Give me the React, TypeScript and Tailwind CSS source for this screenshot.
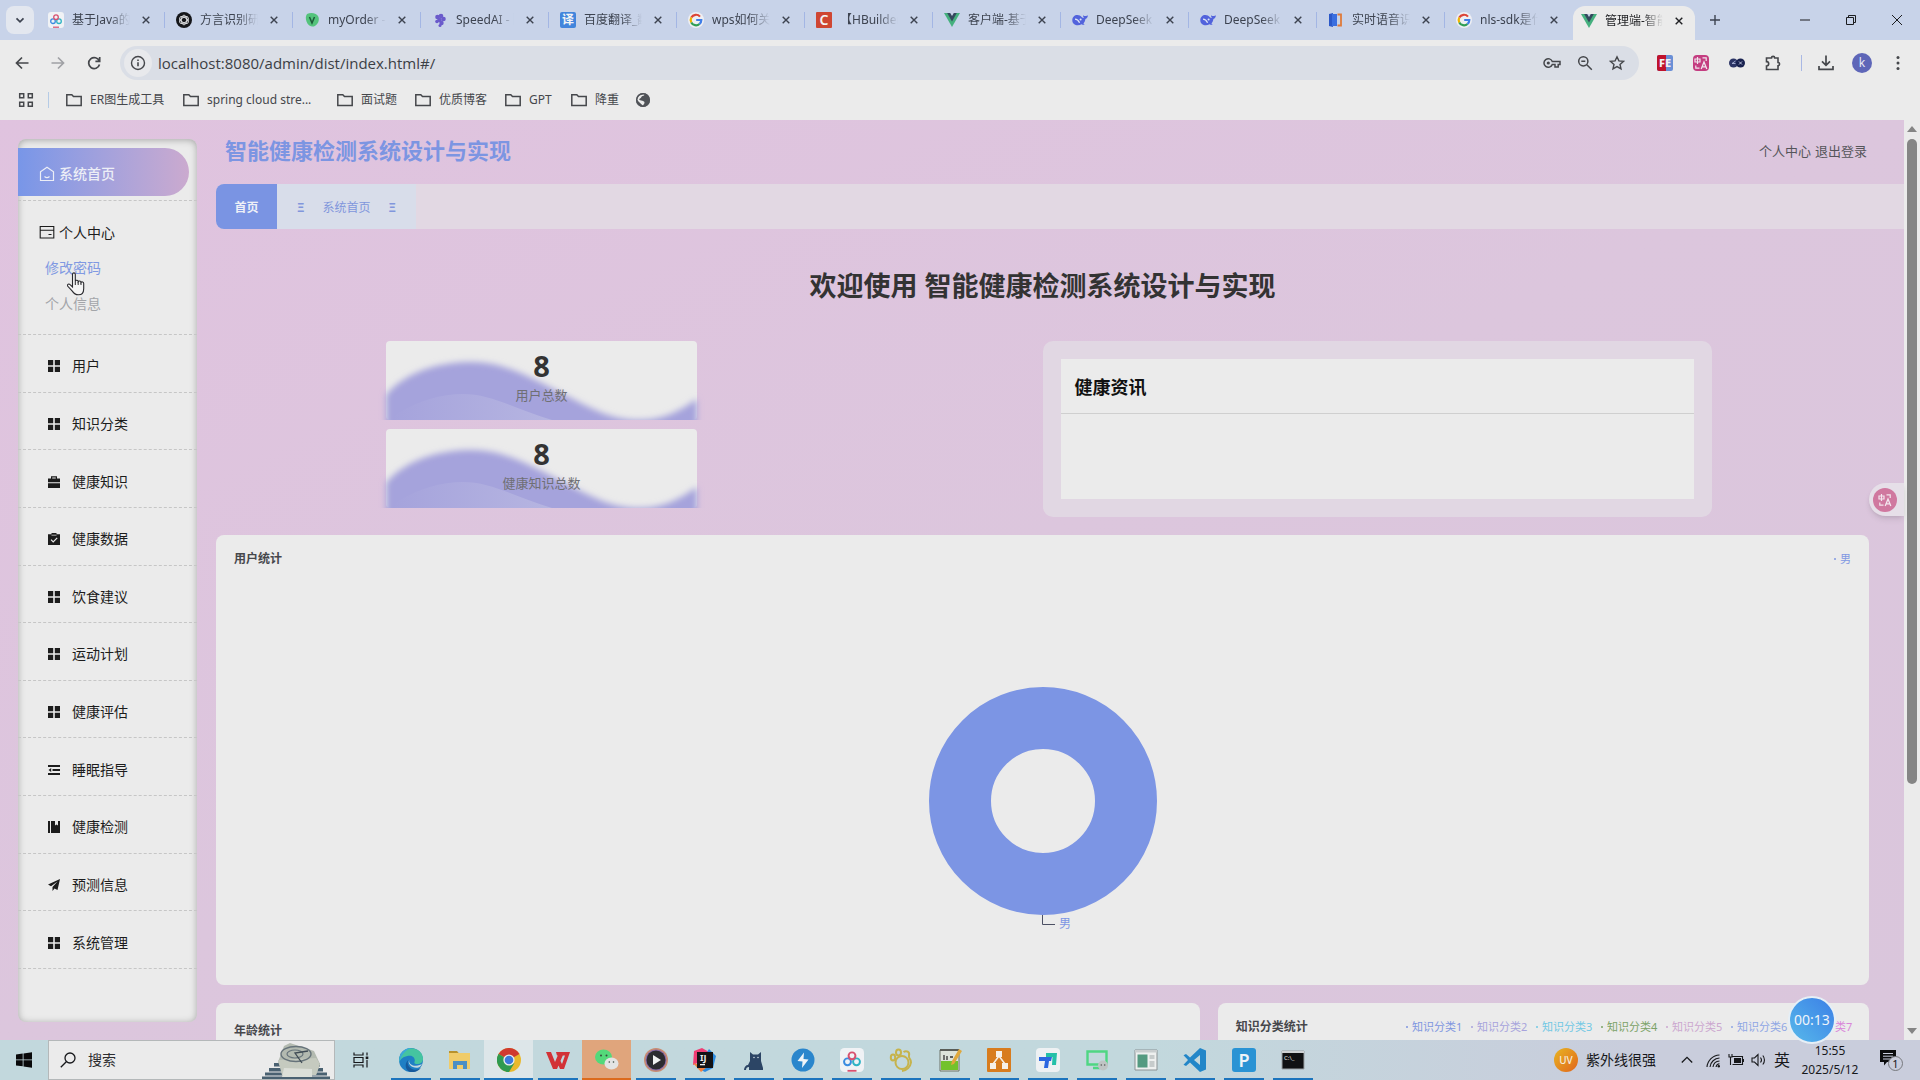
import React from "react";

type P = { children?: React.ReactNode; className?: string; box?: string };

const Svg = ({ children, className = "size-4", box = "0 0 16 16" }: P) => (
  <svg viewBox={box} className={className} fill="none" stroke="currentColor" aria-hidden="true">
    {children}
  </svg>
);

const GLYPH = '"Noto Sans","Noto Sans CJK SC",sans-serif';

/* ---------- favicons ---------- */

const Vue = () => (
  <Svg>
    <path d="M0 1h16L8 15z" fill="#45b07e" stroke="none" />
    <path d="M3.2 1h9.6L8 9.4z" fill="#34495e" stroke="none" />
    <path d="M6.2 1h3.6L8 4z" fill="#c8d3e9" stroke="none" />
  </Svg>
);

const Google = () => (
  <Svg>
    <circle cx="8" cy="8" r="8" fill="#eeeff3" stroke="none" />
    <path d="M12 4.6A5.3 5.3 0 0 0 3.3 5.6" stroke="#dc4437" strokeWidth="2.2" />
    <path d="M3.3 5.6a5.3 5.3 0 0 0 0 4.8" stroke="#f0b400" strokeWidth="2.2" />
    <path d="M3.3 10.4a5.3 5.3 0 0 0 8.2 1.6" stroke="#2f9e55" strokeWidth="2.2" />
    <path d="M11.5 12A5.3 5.3 0 0 0 13.3 8H8.2" stroke="#3f7ee8" strokeWidth="2.2" />
  </Svg>
);

const Whale = () => (
  <Svg>
    <path
      d="M.3 8.2C.3 5 2.6 3 5.300 3c2 0 3.200.8 4.600 2.200.8.8 1.400 1 2 .6-.9-.8-.9-2-.5-2.600.5.8 1.400 1 2.400.9.9-.1 1.500-.5 2-.9.2 1.800-.8 3.200-2.400 3.700-.2 1.800-.9 3.400-2 4.500l1.200 1.100c-1 .5-2.200.2-3-.3C5.500 14.400.3 12.800.3 8.200z"
      fill="#5263dc"
      stroke="none"
    />
    <path d="M3 7.200c2 0 3.600 1.600 4.600 3.600" stroke="#dfe5f5" strokeWidth="1.300" />
    <circle cx="8.600" cy="7.600" r="1" fill="#dfe5f5" stroke="none" />
  </Svg>
);

const Netdisk = ({ className = "size-4" }: P) => (
  <Svg className={className}>
    <rect width="16" height="16" rx="3" fill="#f0f2f5" stroke="none" />
    <circle cx="5" cy="9.200" r="2.300" stroke="#3a8be0" strokeWidth="1.300" />
    <circle cx="11" cy="9.200" r="2.300" stroke="#2fb3c4" strokeWidth="1.300" />
    <circle cx="8" cy="5.200" r="2.300" stroke="#d8506f" strokeWidth="1.300" />
    <path d="M5 15.200h6" stroke="#d8506f" strokeWidth="1.200" />
  </Svg>
);

const OpenAI = () => (
  <Svg>
    <circle cx="8" cy="8" r="8" fill="#15161a" stroke="none" />
    <g stroke="#d9dadd" strokeWidth=".9">
      <ellipse cx="8" cy="8" rx="2.600" ry="4.800" />
      <ellipse cx="8" cy="8" rx="2.600" ry="4.800" transform="rotate(60 8 8)" />
      <ellipse cx="8" cy="8" rx="2.600" ry="4.800" transform="rotate(120 8 8)" />
    </g>
  </Svg>
);

const Letter = ({ t, bg, fg = "#f3f4f6", r = 1, size = 12 }: { t: string; bg: string; fg?: string; r?: number; size?: number }) => (
  <Svg>
    <rect width="16" height="16" rx={r} fill={bg} stroke="none" />
    <text x="8" y={8 + size * 0.36} fontSize={size} textAnchor="middle" fill={fg} stroke="none" fontFamily={GLYPH} fontWeight="600">
      {t}
    </text>
  </Svg>
);

const Leaf = () => (
  <Svg>
    <path d="M3 2c4-2 10-1 11.500 3C16 10 12 15 8 14.600 3 14 0 6 3 2z" fill="#54c37c" stroke="none" />
    <path d="M5.500 5l2.500 6 2.500-6" stroke="#1d5a3a" strokeWidth="1.500" />
  </Svg>
);

const Grape = () => (
  <Svg>
    <g fill="#6a5acb" stroke="none">
      <circle cx="5.500" cy="5" r="2.300" />
      <circle cx="9" cy="4" r="2.300" />
      <circle cx="11.500" cy="7" r="2.300" />
      <circle cx="7.500" cy="8" r="2.300" />
      <circle cx="5" cy="9.500" r="1.800" />
      <circle cx="9.500" cy="11" r="2.200" />
      <circle cx="8" cy="13.500" r="1.500" />
    </g>
  </Svg>
);

const Book = () => (
  <Svg>
    <path d="M1 2l4-1v14l-4-1z" fill="#2c58c8" stroke="none" />
    <path d="M4 2h5v12H4z" fill="#3b6fe0" stroke="none" />
    <path d="M9.500 2.500H13v11H9.500" stroke="#df7b3b" strokeWidth="1.800" />
  </Svg>
);

const tabs: { label: string; icon: React.ReactNode }[] = [
  { label: "基于Java的健康", icon: <Netdisk /> },
  { label: "方言识别研究", icon: <OpenAI /> },
  { label: "myOrder - 订单", icon: <Leaf /> },
  { label: "SpeedAI - 降重", icon: <Grape /> },
  { label: "百度翻译_翻译", icon: <Letter t="译" bg="#4285dc" r={2} size={12} /> },
  { label: "wps如何关闭", icon: <Google /> },
  { label: "【HBuilder】", icon: <Letter t="C" bg="#cf4632" size={14} /> },
  { label: "客户端-基于", icon: <Vue /> },
  { label: "DeepSeek - 探索", icon: <Whale /> },
  { label: "DeepSeek - 探索", icon: <Whale /> },
  { label: "实时语音识别", icon: <Book /> },
  { label: "nls-sdk是什么", icon: <Google /> },
];

const FADE = "w-[58px] overflow-hidden whitespace-nowrap text-left [mask-image:linear-gradient(to_right,#000_65%,transparent)]";

const Cross = ({ className = "size-2" }: P) => (
  <Svg className={className} box="0 0 8 8">
    <path d="M.7.7l6.600 6.600M7.300.7L.7 7.300" strokeWidth="1.400" />
  </Svg>
);

function TabStrip() {
  return (
    <div className="flex h-10 shrink-0 items-stretch bg-[#c8d3e9] text-xs text-[#3d4350]">
      <div className="flex w-[37px] shrink-0 items-center pl-1.5">
        <button aria-label="搜索标签页" className="flex h-7 w-7 items-center justify-center rounded-lg bg-[#e3e7ef]">
          <Svg className="size-2.5" box="0 0 10 10">
            <path d="M1.500 3.300L5 6.800l3.500-3.500" strokeWidth="1.700" />
          </Svg>
        </button>
      </div>
      {tabs.map((t, i) => (
        <div key={i} className="flex w-32 min-w-0 items-center">
          <button className="flex min-w-0 items-center gap-2 pl-[11px]">
            {t.icon}
            <span className={FADE}>{t.label}</span>
          </button>
          <button aria-label="关闭" className="ml-auto mr-3.5 shrink-0">
            <Cross />
          </button>
          <span className={i < 11 ? "h-4 w-px shrink-0 bg-[#a3b6e4]" : "h-4 w-px shrink-0"} />
        </div>
      ))}
      <div className="mt-1.5 flex w-[122px] shrink-0 items-center rounded-t-xl bg-[#ebebeb] pb-1 text-[#1f2023]">
        <button className="flex items-center gap-2 pl-2">
          <Vue />
          <span className={FADE}>管理端-智能健康</span>
        </button>
        <button aria-label="关闭" className="ml-auto mr-3 shrink-0">
          <Cross />
        </button>
      </div>
      <button aria-label="新标签页" className="ml-[15px] shrink-0">
        <Svg className="size-2.5" box="0 0 10 10">
          <path d="M5 0v10M0 5h10" strokeWidth="1.400" />
        </Svg>
      </button>
      <div className="ml-auto flex shrink-0 items-center gap-9 pr-[18px] text-[#1c1d20]">
        <button aria-label="最小化">
          <Svg className="size-2.5" box="0 0 10 10">
            <path d="M0 5h10" />
          </Svg>
        </button>
        <button aria-label="还原">
          <Svg className="size-2.5" box="0 0 10 10">
            <path d="M.5 2.500h7v7h-7zM2.500 2.500v-2h7v7h-2" />
          </Svg>
        </button>
        <button aria-label="关闭窗口">
          <Svg className="size-2.5" box="0 0 10 10">
            <path d="M0 0l10 10M10 0L0 10" />
          </Svg>
        </button>
      </div>
    </div>
  );
}

/* ---------- address bar and bookmarks ---------- */

const TranslateMark = ({ className = "size-4" }: P) => (
  <Svg className={className}>
    <path d="M2 4h5v3H2zM4.500 2v7" strokeWidth="1.200" />
    <path d="M9.500 2.800h3.700V6M2.800 10.500v2.700h3.700" strokeWidth="1.200" />
    <path d="M8.200 14l2.800-7 2.800 7M9.200 11.800h3.600" strokeWidth="1.300" />
  </Svg>
);

function Toolbar() {
  return (
    <div className="flex h-[46px] shrink-0 items-center bg-[#ebebeb] text-[#45474b]">
      <div className="flex items-center gap-5 pl-3.5">
        <button aria-label="后退">
          <Svg>
            <path d="M14.500 8H2.500M8 2.500L2.500 8 8 13.500" strokeWidth="1.700" />
          </Svg>
        </button>
        <button aria-label="前进" className="text-[#a0a1a5]">
          <Svg>
            <path d="M1.500 8h12M8 2.500l5.500 5.500L8 13.500" strokeWidth="1.700" />
          </Svg>
        </button>
        <button aria-label="重新加载">
          <Svg>
            <path d="M13.300 6A5.500 5.500 0 1 0 13.500 9.500M13.700 2v4.300H9.400" strokeWidth="1.700" />
          </Svg>
        </button>
      </div>
      <form className="ml-[18px] flex h-[34px] min-w-0 flex-1 items-center rounded-full bg-[#dadee6] pl-1 pr-3.5">
        <button type="button" aria-label="网站信息" className="flex size-7 items-center justify-center rounded-full bg-[#e8e9ec]">
          <Svg>
            <circle cx="8" cy="8" r="6.500" strokeWidth="1.400" />
            <path d="M8 7.200v4M8 4.500v1.500" strokeWidth="1.600" />
          </Svg>
        </button>
        <input
          aria-label="地址"
          defaultValue="localhost:8080/admin/dist/index.html#/"
          className="ml-1.5 min-w-0 flex-1 bg-transparent font-['Open_Sans',sans-serif] text-[15px] text-[#3c3f45] outline-none"
        />
        <div className="flex items-center gap-4">
          <button type="button" aria-label="密码">
            <Svg className="h-4 w-[18px]" box="0 0 18 16">
              <path d="M9.300 6.500a4.300 4.300 0 1 0 0 3H12v2.500h3.200V9.500H17v-3z" strokeWidth="1.500" />
              <circle cx="5.300" cy="8" r="1.600" fill="currentColor" stroke="none" />
            </Svg>
          </button>
          <button type="button" aria-label="缩放">
            <Svg>
              <circle cx="6.300" cy="6.300" r="4.600" strokeWidth="1.500" />
              <path d="M9.800 9.800l5 5M4.300 6.300h4" strokeWidth="1.500" />
            </Svg>
          </button>
          <button type="button" aria-label="收藏">
            <Svg>
              <path d="M8 1.800l1.900 4.100 4.500.5-3.400 3 1 4.400L8 11.600l-4 2.200 1-4.400-3.400-3 4.500-.5z" strokeWidth="1.400" />
            </Svg>
          </button>
        </div>
      </form>
      <div className="flex shrink-0 items-center gap-5 pl-[18px] pr-3.5">
        <button aria-label="FE">
          <Svg>
            <rect width="16" height="16" rx="2" fill="#6a8fd6" stroke="none" />
            <path d="M2 0h7v16H2a2 2 0 0 1-2-2V2a2 2 0 0 1 2-2z" fill="#c0122c" stroke="none" />
            <text x="8" y="12" fontSize="11" fontWeight="800" textAnchor="middle" fill="#f2f2f4" stroke="none" fontFamily={GLYPH}>
              FE
            </text>
          </Svg>
        </button>
        <button aria-label="翻译" className="rounded-sm bg-[#c43d80] text-[#f0e6ee]">
          <TranslateMark />
        </button>
        <button aria-label="扩展程序">
          <Svg>
            <circle cx="4.500" cy="8" r="4.500" fill="#2c3566" stroke="none" />
            <circle cx="11.500" cy="8" r="4.500" fill="#18214f" stroke="none" />
            <path d="M6.500 6L3 8.500h3.500" stroke="#a9b3d8" strokeWidth=".9" />
            <path d="M10 6.500l3 3M13 6.500l-3 3" stroke="#c9cfe8" strokeWidth=".9" />
          </Svg>
        </button>
        <button aria-label="扩展管理">
          <Svg>
            <path d="M1.500 3h5a1.600 1.600 0 0 1 3.200 0h3.300v4.500a1.600 1.600 0 0 1 0 3.200v3.800H1.500V11a2.200 2.200 0 0 0 0-4.400z" strokeWidth="1.600" />
          </Svg>
        </button>
        <span className="-mr-1 h-4 w-px bg-[#a9b8e4]" />
        <button aria-label="下载">
          <Svg>
            <path d="M8 .5v9.500M4 6.300l4 4 4-4M1 11v3.300h14V11" strokeWidth="1.700" />
          </Svg>
        </button>
        <button aria-label="用户" className="-mx-0.5 flex size-5 items-center justify-center rounded-full bg-[#5e66b8] text-xs text-[#e8e9f4]">
          k
        </button>
        <button aria-label="更多">
          <Svg>
            <g fill="currentColor" stroke="none">
              <circle cx="8" cy="2.500" r="1.500" />
              <circle cx="8" cy="8" r="1.500" />
              <circle cx="8" cy="13.500" r="1.500" />
            </g>
          </Svg>
        </button>
      </div>
    </div>
  );
}

const bookmarks = [
  { label: "ER图生成工具", cls: "w-[117px]" },
  { label: "spring cloud stre...", cls: "w-[154px]" },
  { label: "面试题", cls: "w-[78px]" },
  { label: "优质博客", cls: "w-[90px]" },
  { label: "GPT", cls: "w-[66px]" },
  { label: "降重", cls: "w-[64px]" },
];

function Bookmarks() {
  return (
    <div className="flex h-[34px] shrink-0 items-center bg-[#ebebeb] pb-1.5 text-xs text-[#45474b]">
      <button aria-label="应用" className="ml-[18px]">
        <Svg>
          <path d="M1.700 1.700h4v4h-4zM10.300 1.700h4v4h-4zM1.700 10.300h4v4h-4zM10.300 10.300h4v4h-4z" strokeWidth="1.500" />
        </Svg>
      </button>
      <span className="ml-3.5 mr-[17px] h-4 w-px bg-[#b5cbe6]" />
      {bookmarks.map((b) => (
        <a key={b.label} href="#/" className={`${b.cls} flex items-center gap-2 whitespace-nowrap`}>
          <Svg className="size-4 shrink-0">
            <path d="M.8 2.800h5l1.700 1.800h7.700v8.900H.8z" strokeWidth="1.500" />
          </Svg>
          {b.label}
        </a>
      ))}
      <a href="#/" aria-label="网站">
        <Svg>
          <circle cx="8" cy="8" r="7" fill="#505358" stroke="none" />
          <path d="M9.500 1.800c.3 1.500-.5 2-2 2.200S6.500 6 5 6.500 4 8 6 8.500s3.500.5 3.500 2-1 1.500-1.500 3.300L3.500 9.500 2 7.500l2-4z" fill="#ebebeb" stroke="none" />
          <circle cx="8" cy="8" r="6.300" stroke="#505358" strokeWidth="1.400" />
        </Svg>
      </a>
    </div>
  );
}

/* ---------- sidebar ---------- */

const I = ({ children }: P) => (
  <Svg className="size-3 shrink-0" box="0 0 12 12">
    <g fill="currentColor" stroke="none">{children}</g>
  </Svg>
);
const GridI = () => (
  <I>
    <path d="M0 0h5.200v5.200H0zM6.800 0H12v5.200H6.800zM0 6.800h5.200V12H0zM6.800 6.800H12V12H6.800z" />
  </I>
);

const menu: { label: string; icon: React.ReactNode }[] = [
  { label: "用户", icon: <GridI /> },
  { label: "知识分类", icon: <GridI /> },
  {
    label: "健康知识",
    icon: (
      <I>
        <path d="M3 2.500V.3h6v2.200h3v3.700H0V2.500zm1.200 0h3.600V1.400H4.200zM0 7.200h12V12H0z" />
      </I>
    ),
  },
  {
    label: "健康数据",
    icon: (
      <I>
        <path d="M0 1.200h3.500V0h5v1.200H12V12H0z" />
        <path d="M3 6.600l2.200 2.200L9.200 4.800" fill="none" stroke="#ebebeb" strokeWidth="1.200" />
        <path d="M3.500 2.200h5" stroke="#ebebeb" strokeWidth=".7" />
      </I>
    ),
  },
  { label: "饮食建议", icon: <GridI /> },
  { label: "运动计划", icon: <GridI /> },
  { label: "健康评估", icon: <GridI /> },
  {
    label: "睡眠指导",
    icon: (
      <I>
        <path d="M0 1h12v2H0zM4.500 5H12v2H4.500zM0 9h12v2H0zM3.200 4v4L.5 6z" />
      </I>
    ),
  },
  {
    label: "健康检测",
    icon: (
      <I>
        <path d="M0 0h2v12H0zM3 0h4v4.500L8.500 3.400 10 4.500V0h2v12H3z" />
      </I>
    ),
  },
  {
    label: "预测信息",
    icon: (
      <I>
        <path d="M12 0L0 5.500l3 1.700L9.500 2.500 4.500 8v4l2-2.600 3 1.600z" />
      </I>
    ),
  },
  { label: "系统管理", icon: <GridI /> },
];

function Sidebar() {
  return (
    <aside className="mb-[18px] ml-[18px] mt-[19px] w-[179px] shrink-0 rounded-lg bg-[#ebebeb] text-sm text-[#1c1c1c] shadow-[inset_0_1px_7px_#a5a5a5]">
      <div className="border-b border-dashed border-[#c6c6c6] pb-1 pt-[9px]">
        <a href="#/" className="mr-2 flex h-12 items-center gap-1 rounded-r-full bg-linear-to-r from-[#7896e8] to-[#cbaacf] pl-[21px] pt-1 text-[#eceef6]">
          <Svg>
            <path d="M8 1.200l6.500 4.600v8.700h-13V5.800zM5.500 10.500c1.400 1.200 3.600 1.200 5 0" strokeWidth="1.200" />
          </Svg>
          <span className="font-medium">系统首页</span>
        </a>
      </div>
      <div className="border-b border-dashed border-[#c6c6c6] pb-[15px] pt-3">
        <a href="#/center" className="flex h-10 items-center gap-1 pl-[21px]">
          <Svg>
            <path d="M1.200 1.500h13.600V13H1.200zM1.200 5.200h13.600M9.500 9.500h3" strokeWidth="1.100" />
          </Svg>
          个人中心
        </a>
        <div className="flex flex-col gap-1.5 pl-[27px] leading-[30px]">
          <a href="#/updatePassword" className="text-[#8099e2]">修改密码</a>
          <a href="#/info" className="text-[#a3a5a9]">个人信息</a>
        </div>
      </div>
      <nav className="grid h-[634px] auto-rows-fr">
        {menu.map((m) => (
          <a key={m.label} href="#/" className="flex items-center gap-3 border-b border-dashed border-[#c6c6c6] pl-[30px] pt-1.5">
            {m.icon}
            {m.label}
          </a>
        ))}
      </nav>
    </aside>
  );
}

/* ---------- dashboard ---------- */

const Stat = ({ value, label, id }: { value: string; label: string; id: string }) => (
  <div className="relative h-[79px] rounded-sm bg-[#ebebeb] text-center">
    <svg viewBox="-10 0 331 79" preserveAspectRatio="none" className="absolute inset-y-0 -left-2.5 h-full w-[331px] overflow-hidden" aria-hidden="true">
      <defs>
        <filter id={`${id}b`} x="-10%" y="-20%" width="120%" height="150%">
          <feGaussianBlur stdDeviation="3" />
        </filter>
        <linearGradient id={`${id}g`}>
          <stop offset="0" stopColor="#a5a3dc" />
          <stop offset="1" stopColor="#b6b5e1" />
        </linearGradient>
      </defs>
      <path
        d="M0 54C22 28 58 21 86 21C122 21 150 40 185 57C212 71 228 79 254 79C282 79 298 66 311 58V110H0z"
        fill="#a5a3dc"
        filter={`url(#${id}b)`}
      />
      <path d="M12 72C32 60 55 53 77 53C106 53 132 69 166 79H6z" fill={`url(#${id}g)`} />
    </svg>
    <div className="relative pt-1.5">
      <div className="text-[29px] font-bold leading-[38px] text-[#333]">{value}</div>
      <div className="text-[13px] leading-5 text-[#6f6f74]">{label}</div>
    </div>
  </div>
);

const legend = [
  "text-[#7f96e0]",
  "text-[#a7a3dc]",
  "text-[#72c8e4]",
  "text-[#7ba267]",
  "text-[#cba7cf]",
  "text-[#8fa6e4]",
  "text-[#d984d9]",
];

function Dashboard() {
  return (
    <main className="flex min-w-0 flex-1 flex-col pl-[19px]">
      <header className="flex h-16 shrink-0 items-center justify-between pb-1 pl-[9px] pr-[37px]">
        <h1 className="text-[22px] font-bold text-[#7c95e2]">智能健康检测系统设计与实现</h1>
        <div className="flex gap-1 pt-1 text-[13px] text-[#55555a]">
          <a href="#/center">个人中心</a>
          <button>退出登录</button>
        </div>
      </header>
      <div className="flex h-[45px] shrink-0 overflow-hidden rounded-l-lg bg-[#e2d8e3] text-xs">
        <a href="#/" className="flex w-[61px] items-center justify-center bg-[#7a94e3] pt-0.5 font-bold text-[#eef0f7]">首页</a>
        <div className="flex w-[139px] items-center justify-center gap-[18px] bg-[#d8ddea] pt-0.5 text-[#8196dc]">
          <span className="font-bold">Ξ</span>
          <span>系统首页</span>
          <span className="font-bold">Ξ</span>
        </div>
      </div>
      <div className="mr-[35px] shrink-0">
        <h2 className="pb-[35px] pt-[37px] text-center text-[27px] font-bold leading-10 text-[#333]">欢迎使用 智能健康检测系统设计与实现</h2>
        <div className="grid grid-cols-2">
          <div className="ml-[170px] flex w-[311px] flex-col gap-[9px]">
            <Stat id="u" value="8" label="用户总数" />
            <Stat id="k" value="8" label="健康知识总数" />
          </div>
          <section className="h-44 w-[81%] rounded-[10px] bg-[#e1d7e3] p-[18px]">
            <div className="h-full bg-[#ebebeb]">
              <h3 className="border-b border-[#cfcfcf] px-3.5 pt-0.5 text-lg font-bold leading-[52px] text-[#111]">健康资讯</h3>
            </div>
          </section>
        </div>
        <section className="mt-[18px] h-[450px] rounded-lg bg-[#ebebeb] px-[18px] pt-4">
          <div className="flex items-center justify-between">
            <h3 className="text-xs font-bold text-[#46474b]">用户统计</h3>
            <span className="flex items-center gap-1 text-[11px] text-[#8198e2]">
              <i className="size-0.5 rounded-full bg-current" />男
            </span>
          </div>
          <svg viewBox="0 0 240 260" className="mx-auto mt-[115px] h-[260px] w-60" role="img" aria-label="用户统计: 男">
            <circle cx="120" cy="118" r="83" fill="none" stroke="#7c95e4" strokeWidth="62" />
            <path d="M119.500 232v9.500H132" fill="none" stroke="#4c5064" />
            <text x="136" y="245" fontSize="12" fill="#7c95e4" fontFamily={GLYPH}>男</text>
          </svg>
        </section>
        <div className="mt-[18px] flex gap-[18px]">
          <section className="h-80 flex-[985] rounded-lg bg-[#ebebeb] px-[18px] pt-5">
            <h3 className="text-xs font-bold text-[#46474b]">年龄统计</h3>
          </section>
          <section className="flex h-80 flex-[650] items-start justify-between rounded-lg bg-[#ebebeb] pl-[18px] pr-2 pt-4">
            <h3 className="text-xs font-bold text-[#46474b]">知识分类统计</h3>
            <ul className="flex text-[11px]">
              {legend.map((c, i) => (
                <li key={c} className={`${c} flex w-[65px] items-center gap-1 whitespace-nowrap`}>
                  <i className="size-0.5 rounded-full bg-current" />知识分类{i + 1}
                </li>
              ))}
            </ul>
          </section>
        </div>
      </div>
    </main>
  );
}

function Scrollbar() {
  return (
    <div className="flex w-4 shrink-0 flex-col items-center bg-[#ebebeb] py-1.5 text-[#858585]">
      <Svg className="h-1.5 w-2.5 shrink-0" box="0 0 10 6">
        <path d="M0 6h10L5 0z" fill="currentColor" stroke="none" />
      </Svg>
      <div className="mt-[7px] w-2.5 flex-[644] rounded-full bg-[#858585]" />
      <div className="flex-[243]" />
      <Svg className="h-1.5 w-2.5 shrink-0" box="0 0 10 6">
        <path d="M0 0h10L5 6z" fill="currentColor" stroke="none" />
      </Svg>
    </div>
  );
}

/* ---------- taskbar ---------- */

const T = ({ children }: P) => (
  <Svg className="size-6" box="0 0 24 24">
    <g stroke="none">{children}</g>
  </Svg>
);

const apps: { name: string; icon: React.ReactNode; tone?: "on" | "alert" }[] = [
  {
    name: "Edge",
    icon: (
      <T>
        <circle cx="12" cy="12" r="12" fill="#1f7fc4" />
        <path d="M1 8C4 1 11-1 17 1.200c5 2 7 6 7 9.800 0 3-2.500 5-5.500 5-2.500 0-3.500-1-3-2.200 1-2-.5-6-4.500-6C6 7.800 2 10 .5 14 0 12 .2 10 1 8z" fill="#45c4a0" />
        <path d="M1 8C3 2 9-.5 13 .1 8 1 3 5 .5 14 0 12 .2 10 1 8z" fill="#3ba8dc" />
        <path d="M9.500 12c-2 3-.5 8 5 9.500 3 .8 6-.5 7.500-2-2 3.500-6 5-10 4.500C6 23 5 15 9.500 12z" fill="#165a9c" />
        <path d="M10.500 11.500c-1.500 3 1.500 6.500 6.500 6.300 2.500-.1 5-1 6-2-1 2-2 3.500-3.500 3.800-6 1.400-12-4-9-8.100z" fill="#c4d7df" />
      </T>
    ),
  },
  {
    name: "文件资源管理器",
    icon: (
      <T>
        <path d="M1 3h8l2 2.500H1z" fill="#b8922c" />
        <path d="M1 5h21v16H1z" fill="#f0cc6a" />
        <path d="M5 21v-8h14v8h-4v-4h-6v4z" fill="#4b8fc4" />
      </T>
    ),
  },
  {
    name: "Chrome",
    tone: "on",
    icon: (
      <T>
        <circle cx="12" cy="12" r="12" fill="#e9b92c" />
        <path d="M12 12L1.600 6A12 12 0 0 1 22.400 6z" fill="#d03a30" />
        <path d="M12 12v12A12 12 0 0 1 1.600 6l5.200 9z" fill="#2f9a50" />
        <path d="M6.800 9L1.600 6C0 9 0 14 2 18l5-2zM12 17.500L9 24h3l5.500-9z" fill="#2f9a50" />
        <circle cx="12" cy="12" r="5.600" fill="#e9eef0" />
        <circle cx="12" cy="12" r="4.300" fill="#3c79dc" />
      </T>
    ),
  },
  {
    name: "WPS",
    icon: (
      <T>
        <path d="M0 4h5l4 10 3-7h5l-6 14H7zM10 4h14l-6 17h-4l-3-7 2-4 3 6 3-8.500H11z" fill="#d23236" />
      </T>
    ),
  },
  {
    name: "微信",
    tone: "alert",
    icon: (
      <T>
        <ellipse cx="8.500" cy="9" rx="8.500" ry="7.500" fill="#53d97a" />
        <ellipse cx="16.500" cy="15.500" rx="7" ry="6" fill="#e3e4e3" />
        <g fill="#3a4a3e">
          <circle cx="6" cy="7.500" r="1" />
          <circle cx="11.500" cy="7.500" r="1" />
          <circle cx="14.300" cy="14" r=".8" />
          <circle cx="18.500" cy="14" r=".8" />
        </g>
      </T>
    ),
  },
  {
    name: "播放器",
    icon: (
      <T>
        <circle cx="12" cy="12" r="12" fill="#c98d72" />
        <circle cx="12" cy="12" r="10.500" fill="#8a6ba8" />
        <circle cx="12" cy="12" r="9.500" fill="#2c2b30" />
        <path d="M9 7v10l8-5z" fill="#f1f1f1" />
      </T>
    ),
  },
  {
    name: "IntelliJ IDEA",
    icon: (
      <T>
        <path d="M1 3l8-3 7 4-7 9-9 4z" fill="#ef3d74" />
        <path d="M16 1l7 7-3 12-8 4-8-4z" fill="#2c8be0" />
        <path d="M0 15l8 9 6-5z" fill="#f4803c" />
        <rect x="4" y="4" width="16" height="16" fill="#131215" />
        <text x="7" y="13" fontSize="9" fontWeight="700" fill="#eee" fontFamily={GLYPH}>IJ</text>
        <path d="M7 16h5v1.300H7z" fill="#eee" />
      </T>
    ),
  },
  {
    name: "Navicat",
    icon: (
      <T>
        <path d="M8 4l3 2.500h5L19 4v9l2 7v2H7v-3c-2 0-3 1-3 3H2c0-3 2-5 4-5l2-4z" fill="#2c4565" />
        <circle cx="12" cy="9.500" r=".8" fill="#c6d4dd" />
        <circle cx="16" cy="9.500" r=".8" fill="#c6d4dd" />
      </T>
    ),
  },
  {
    name: "迅雷",
    icon: (
      <T>
        <circle cx="12" cy="12" r="11.500" fill="#2a86cc" />
        <path d="M13 4.500L6.500 13l5 .5-.5 6.500 6.500-8.500-5-.5z" fill="#eef4f8" />
      </T>
    ),
  },
  { name: "百度网盘", icon: <Netdisk className="size-6" /> },
  {
    name: "工具",
    icon: (
      <T>
        <g fill="none" stroke="#c6b34c" strokeWidth="2">
          <circle cx="13" cy="14.500" r="6.500" />
          <ellipse cx="4" cy="9.500" rx="2.200" ry="3" />
          <ellipse cx="9.500" cy="4.500" rx="2.500" ry="3" />
          <path d="M14.500 4c3-2 6.500 0 5.500 3.500s2.500 3 2 7-4 8-9 8.500" />
        </g>
      </T>
    ),
  },
  {
    name: "Notepad++",
    icon: (
      <T>
        <path d="M2 2h19v21H2z" fill="#dde3da" stroke="#6c7268" />
        <path d="M3 13h17v9H3z" fill="#73c22c" />
        <path d="M2 1h19v2H2z" fill="#5a5d58" />
        <path d="M21 1l3 2-8 13-3 1 1-4z" fill="#e0a83c" />
        <path d="M6 7v5M9 8v4M12 9h3" stroke="#333" strokeWidth="1.300" />
      </T>
    ),
  },
  {
    name: "draw.io",
    icon: (
      <T>
        <rect width="24" height="24" rx="1" fill="#d87c1e" />
        <path d="M9 3h6v6H9zM3 15h6v6H3zM15 15h6v6h-6z" fill="#f6f0e8" />
        <path d="M12 8L6 16M12 8l6 8" stroke="#f6f0e8" strokeWidth="1.500" />
      </T>
    ),
  },
  {
    name: "ToDesk",
    icon: (
      <T>
        <rect width="24" height="24" rx="4" fill="#eef1f3" />
        <path d="M10 5h11l-1 12h-4l.5-8H10z" fill="#25c0a8" />
        <path d="M3 9h13l-1 4h-2l-1 7H8l1-7H3z" fill="#2c67e0" />
      </T>
    ),
  },
  {
    name: "远程桌面",
    icon: (
      <T>
        <path d="M2.500 3.500h19v13h-19zM8 20h7" fill="none" stroke="#4fd683" strokeWidth="2.400" />
        <circle cx="18" cy="17.500" r="5" fill="#bfc4c4" />
        <circle cx="16.300" cy="17" r=".8" fill="#555" />
        <circle cx="19.700" cy="17" r=".8" fill="#555" />
      </T>
    ),
  },
  {
    name: "窗口",
    icon: (
      <T>
        <path d="M1 2h22v20H1z" fill="#eef0ef" stroke="#8b9294" />
        <path d="M1 2h22v2.500H1z" fill="#c9cecf" />
        <path d="M3.500 6.500h10v13h-10z" fill="#549a80" />
        <path d="M15.500 7h5v4h-5zM15.500 13h5v6h-5z" fill="#c6cbcb" />
      </T>
    ),
  },
  {
    name: "VS Code",
    icon: (
      <T>
        <path d="M17 0l6 2.500v19L17 24 7 14.500l-4 3.500-2.500-1.200L5 12 .5 7.200 3 6l4 3.500zm0 7l-6 5 6 5z" fill="#2286c8" />
      </T>
    ),
  },
  {
    name: "PyCharm",
    icon: (
      <T>
        <rect width="24" height="24" rx="3" fill="#2a93d4" />
        <text x="12" y="18.500" fontSize="18" textAnchor="middle" fontWeight="600" fill="#eef4f8" fontFamily={GLYPH}>P</text>
      </T>
    ),
  },
  {
    name: "命令提示符",
    icon: (
      <T>
        <path d="M1 3h22v18H1z" fill="#101113" stroke="#9aa0a4" />
        <path d="M1 3h22v2H1z" fill="#cfd2d4" />
        <text x="3" y="12" fontSize="6" fill="#e8e8e8" fontFamily={GLYPH}>C:\_</text>
      </T>
    ),
  },
];

function Taskbar() {
  return (
    <footer className="flex h-10 shrink-0 items-stretch bg-linear-to-r from-[#c2d8dd] from-60% to-[#c9cddc] to-85% text-[#17181b]">
      <button aria-label="开始" className="w-12 pl-4">
        <Svg>
          <path d="M0 2.400l6.700-.9v6H0zM7.500 1.400L16 .2v7.300H7.500zM0 8.300h6.700v6L0 13.400zM7.500 8.300H16v7.500l-8.500-1.200z" fill="#08090a" stroke="none" />
        </Svg>
      </button>
      <label className="flex w-[287px] items-center border border-[#b4b8b9] bg-[#ebebeb] pl-[11px]">
        <Svg>
          <circle cx="10" cy="6" r="5" strokeWidth="1.300" />
          <path d="M6.300 9.700L.8 15.300" strokeWidth="1.300" />
        </Svg>
        <input aria-label="搜索" placeholder="搜索" className="ml-3 w-40 bg-transparent text-sm outline-none placeholder:text-[#2c2d30]" />
        <Svg className="ml-auto mr-1 h-[37px] w-[68px] shrink-0" box="0 0 68 37">
          <g stroke="none">
            <path d="M12 21h46v3.500H12zM7 26h54v3.500H7zM3 30.500h62v3H3zM0 34.500h68V37H0z" fill="#4a6171" />
            <path d="M22 4l6-3 24 8 6 13-4 11H22l-6-13z" fill="#b3bab0" />
            <path d="M16 18l38-2 4 6-4 11H20z" fill="#c5cabf" />
            <path d="M22 26l28 1v8H20z" fill="#dcdfd8" />
          </g>
          <ellipse cx="34" cy="12" rx="15" ry="7.500" stroke="#66737a" strokeWidth="1.400" />
          <ellipse cx="33" cy="12" rx="8" ry="4" stroke="#66737a" strokeWidth="1.200" />
          <path d="M46 9l-13 2 7 10" stroke="#3f4b54" strokeWidth="1.300" />
        </Svg>
      </label>
      <button aria-label="任务视图" className="flex w-[51px] items-center justify-center">
        <Svg>
          <path d="M1 .5v2.500h9V.5M1 15.500V13h9v2.500M1 5.500h9v5H1zM14 .5v3M14 8v7.500" strokeWidth="1.200" />
          <path d="M12.700 4.500h2.600v2.600h-2.600z" fill="currentColor" stroke="none" />
        </Svg>
      </button>
      <div className="flex">
        {apps.map((a) => (
          <button
            key={a.name}
            aria-label={a.name}
            className={
              a.tone === "alert"
                ? "flex w-[49px] flex-col items-center justify-between bg-[#e0a57c] pt-2"
                : a.tone === "on"
                  ? "flex w-[49px] flex-col items-center justify-between bg-[#dde6e9] pt-2"
                  : "flex w-[49px] flex-col items-center justify-between pt-2"
            }
          >
            {a.icon}
            <span className={a.tone === "alert" ? "h-0.5 w-full bg-[#dc6a1c]" : a.tone === "on" ? "h-0.5 w-full bg-[#1c74bd]" : "h-0.5 w-10 bg-[#1c74bd]"} />
          </button>
        ))}
      </div>
      <div className="ml-auto flex shrink-0 items-center pr-4 text-sm">
        <button className="flex items-center gap-2">
          <span className="flex size-6 items-center justify-center rounded-full bg-linear-to-br from-[#e6b422] to-[#e0641c] text-[10px] font-medium text-[#f7ecdc]">UV</span>
          紫外线很强
        </button>
        <button aria-label="显示隐藏的图标" className="ml-[25px]">
          <Svg className="size-3" box="0 0 12 12">
            <path d="M.8 8.500L6 3.300l5.200 5.200" strokeWidth="1.300" />
          </Svg>
        </button>
        <div className="ml-3 flex items-center gap-[7px]">
          <Svg>
            <path d="M2 15A13 13 0 0 1 14.500 3M5 15a10 10 0 0 1 9.500-9M8 15a7 7 0 0 1 6.500-6M11 15a4 4 0 0 1 3.500-3.200" strokeWidth="1.100" />
            <circle cx="13.800" cy="14.200" r="1.200" fill="currentColor" stroke="none" />
          </Svg>
          <Svg>
            <path d="M4.500 4.500h10v8h-10M15.500 7v3M1 2v3h3V2M2.500 5v8" strokeWidth="1.100" />
            <path d="M6 6h7v5H6z" fill="currentColor" stroke="none" />
          </Svg>
          <Svg>
            <path d="M1 6h2.500L7 2.500v11L3.500 10H1zM9.500 5.500c1.200 1.500 1.200 3.500 0 5M11.800 3.500c2.200 2.500 2.200 6.500 0 9" strokeWidth="1.100" />
          </Svg>
          <span className="text-base">英</span>
        </div>
        <div className="ml-2.5 w-[60px] whitespace-nowrap text-center text-xs leading-[19px]">
          <div>15:55</div>
          <div>2025/5/12</div>
        </div>
        <button aria-label="通知" className="ml-5">
          <Svg className="size-6" box="0 0 24 24">
            <path d="M0 2h16v12H7l-3 3.500V14H0z" fill="#0c0d0e" stroke="none" />
            <path d="M3 5.500h10M3 8.200h10M3 11h7" stroke="#c9cddc" />
            <circle cx="15.500" cy="15.500" r="7" fill="#c9cddc" stroke="#77797e" />
            <text x="15.500" y="19.500" fontSize="11" textAnchor="middle" fill="#17181b" stroke="none" fontFamily={GLYPH}>1</text>
          </Svg>
        </button>
      </div>
    </footer>
  );
}

export default function App() {
  return (
    <div className="relative flex h-screen w-full flex-col overflow-hidden font-['Noto_Sans','Noto_Sans_CJK_SC',sans-serif]">
      <TabStrip />
      <Toolbar />
      <Bookmarks />
      <div className="relative flex min-h-0 flex-1 overflow-hidden bg-linear-to-br from-[#e0c3df] via-[#dcc6dd] to-[#dac6dc]">
        <Sidebar />
        <Dashboard />
        <Scrollbar />
        <button
          aria-label="翻译网页"
          className="absolute right-4 top-[363px] flex h-[33px] w-[35px] items-center rounded-l-full bg-[#e6dfe8] pl-1 shadow-md"
        >
          <span className="flex size-6 items-center justify-center rounded-full bg-[#d0789f] text-[#f3e6ee]">
            <TranslateMark />
          </span>
        </button>
        <Svg className="absolute left-[66px] top-[152px] h-6 w-5" box="0 0 20 24">
          <path
            d="M6.500 15V2.200C6.500.4 9.300.4 9.300 2.200V9c.5-1.200 2.900-.9 2.900.6.700-1.100 2.800-.7 2.800.8.700-.9 2.700-.4 2.700 1.100v5.200c0 3.600-2 6.100-5.200 6.100-3.300 0-4.600-1-6-3.400L1.600 14c-.6-1.500 1.200-2.700 2.500-1.300z"
            fill="#f4f4f4"
            stroke="#2a2a2e"
            strokeWidth="1.100"
          />
          <path d="M9.300 9v4M12.200 9.800V13M15 10.500V13" stroke="#2a2a2e" />
        </Svg>
      </div>
      <Taskbar />
      <div className="absolute bottom-9 right-[84px] flex size-12 items-center justify-center rounded-full border-2 border-[#e6eff6] bg-linear-to-bl from-[#3d7fe6] to-[#58b8ea] text-sm text-[#eef4fb]">
        00:13
      </div>
    </div>
  );
}
